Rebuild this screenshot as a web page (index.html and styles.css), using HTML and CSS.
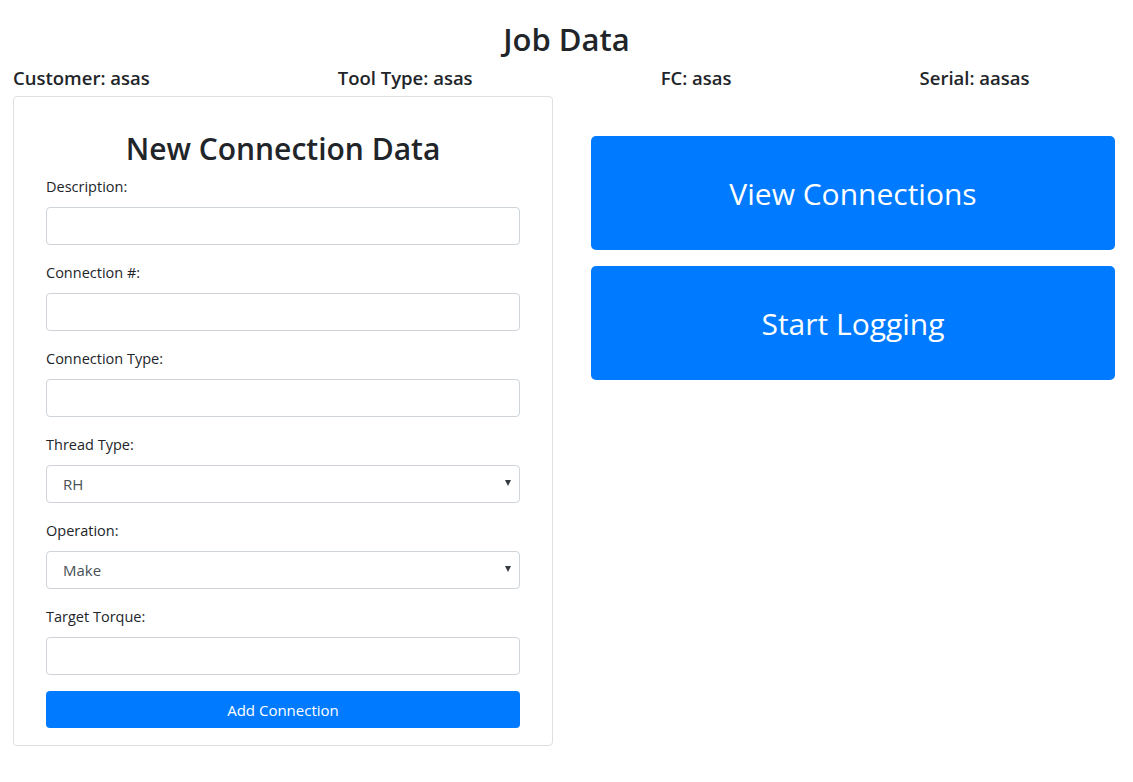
FILE: index.html
```html
<!DOCTYPE html>
<html>
<head>
<meta charset="utf-8">
<link rel="stylesheet" href="styles.css">
</head>
<body>
<h1 class="page-title">Job Data</h1>
<div class="info-row">
  <div class="info">Customer: asas</div>
  <div class="info">Tool Type: asas</div>
  <div class="info">FC: asas</div>
  <div class="info">Serial: aasas</div>
</div>
<div class="main">
  <div class="card">
    <h2 class="card-title">New Connection Data</h2>
    <form class="form">
      <div class="group">
        <label class="label">Description:</label>
        <input class="control" type="text">
      </div>
      <div class="group">
        <label class="label">Connection #:</label>
        <input class="control" type="text">
      </div>
      <div class="group">
        <label class="label">Connection Type:</label>
        <input class="control" type="text">
      </div>
      <div class="group">
        <label class="label">Thread Type:</label>
        <div class="select"><span>RH</span><span class="caret"></span></div>
      </div>
      <div class="group">
        <label class="label">Operation:</label>
        <div class="select"><span>Make</span><span class="caret"></span></div>
      </div>
      <div class="group">
        <label class="label">Target Torque:</label>
        <input class="control" type="text">
      </div>
      <button type="button" class="btn-add">Add Connection</button>
    </form>
  </div>
  <div class="actions">
    <button type="button" class="btn-big">View Connections</button>
    <button type="button" class="btn-big">Start Logging</button>
  </div>
</div>
</body>
</html>
```
FILE: styles.css
```css
* { box-sizing: border-box; }
body {
  margin: 0;
  padding: 0 13px;
  font-family: "Open Sans", "Noto Sans", sans-serif;
  color: #212529;
  background: #fff;
}
.page-title {
  margin: 0;
  padding-top: 19px;
  text-align: center;
  font-size: 31px;
  font-weight: 600;
  line-height: 40px;
}
.info-row {
  display: flex;
  gap: 188px;
  height: 37px;
  align-items: center;
}
.info {
  font-size: 18.5px;
  font-weight: 600;
}
.main {
  display: flex;
  align-items: flex-start;
  gap: 38px;
}
.card {
  width: 540px;
  border: 1px solid #dfdfdf;
  border-radius: 4px;
  padding: 32px 32px 17px;
}
.card-title {
  margin: 0 0 6px;
  text-align: center;
  font-size: 30px;
  font-weight: 600;
  line-height: 40px;
}
.group { margin-bottom: 16px; }
.label {
  display: block;
  font-size: 14.5px;
  line-height: 24px;
  margin-bottom: 8px;
}
.control, .select {
  display: block;
  width: 100%;
  height: 38px;
  border: 1px solid #ced4da;
  border-radius: 4px;
  background: #fff;
  font: inherit;
}
.select {
  display: flex;
  align-items: center;
  justify-content: space-between;
  padding: 0 8px 0 16px;
  color: #495057;
  font-size: 15px;
}
.caret {
  width: 0;
  height: 0;
  border-left: 3.5px solid transparent;
  border-right: 3.5px solid transparent;
  border-top: 6px solid #343a40;
  margin-top: -3px;
}
.btn-add {
  display: block;
  width: 100%;
  height: 37px;
  border: 0;
  border-radius: 4px;
  background: #007bff;
  color: #fff;
  font-family: inherit;
  font-size: 15px;
}
.actions {
  display: flex;
  flex-direction: column;
  gap: 16px;
  padding-top: 40px;
  width: 524px;
}
.btn-big {
  height: 114px;
  border: 0;
  border-radius: 5px;
  background: #007bff;
  color: #fff;
  font-family: inherit;
  font-size: 30px;
}
```
